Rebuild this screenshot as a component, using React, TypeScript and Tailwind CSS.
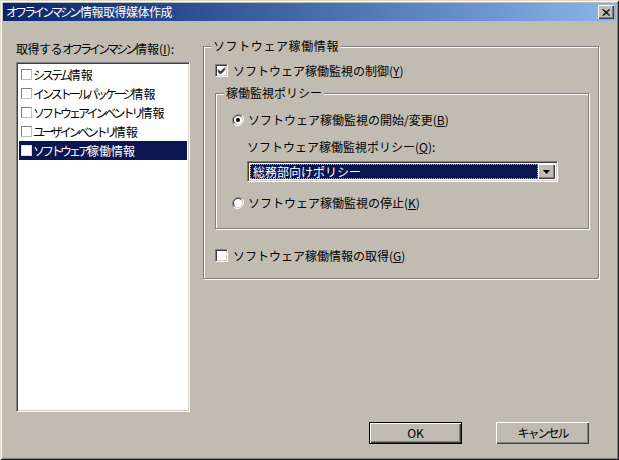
import React from "react";

const font = { fontFamily: '"Noto Sans CJK JP", "Noto Sans", sans-serif' };

function Check({ checked }: { checked: boolean }) {
  return (
    <div className="w-[13px] h-[13px] bg-white border border-[#808080] border-r-white border-b-white shadow-[inset_1px_1px_0_#404040,inset_-1px_-1px_0_#d4d0c8] flex items-center justify-center shrink-0">
      {checked && (
        <svg width="9" height="9" viewBox="0 0 9 9">
          <path d="M1 3.5 L3.5 6 L8 1.5 M1 4.5 L3.5 7 L8 2.5 M1 5.5 L3.5 8 L8 3.5" stroke="#000" strokeWidth="1" fill="none" />
        </svg>
      )}
    </div>
  );
}

function Radio({ checked }: { checked: boolean }) {
  return (
    <svg width="12" height="12" viewBox="0 0 12 12" className="shrink-0">
      <path d="M10.2 1.8 A6 6 0 0 0 1.8 10.2" stroke="#808080" strokeWidth="1" fill="none" />
      <path d="M1.8 10.2 A6 6 0 0 0 10.2 1.8" stroke="#ffffff" strokeWidth="1" fill="none" />
      <circle cx="6" cy="6" r="4.5" fill="#fff" />
      <path d="M9.2 2.8 A4.5 4.5 0 0 0 2.8 9.2" stroke="#404040" strokeWidth="1" fill="none" />
      <path d="M2.8 9.2 A4.5 4.5 0 0 0 9.2 2.8" stroke="#d4d0c8" strokeWidth="1" fill="none" />
      {checked && <circle cx="6" cy="6" r="2" fill="#000" />}
    </svg>
  );
}

function Btn({ children, def }: { children: React.ReactNode; def?: boolean }) {
  return (
    <div
      className={
        "w-[93px] h-[22px] flex items-center justify-center text-[12px] text-black bg-[#c0bcb1] " +
        (def
          ? "border border-black shadow-[inset_1px_1px_0_#fff,inset_-1px_-1px_0_#404040,inset_-2px_-2px_0_#808080]"
          : "shadow-[inset_1px_1px_0_#fff,inset_-1px_-1px_0_#404040,inset_-2px_-2px_0_#808080]")
      }
    >
      {children}
    </div>
  );
}

function ListItem({ kana, kanji, selected }: { kana: string; kanji: string; selected?: boolean }) {
  return (
    <div className={"h-[19px] flex items-center pl-[2px] " + (selected ? "bg-[#0b1650] text-white" : "text-black")}>
      <div className={"w-[11px] h-[11px] bg-white border " + (selected ? "border-[#e0e0e0]" : "border-[#808080] border-r-[#c0c0c0] border-b-[#c0c0c0]")} />
      <span className="ml-[1px] text-[12px] leading-none whitespace-nowrap">
        <span className="tracking-[-3px]">{kana}</span>
        <span className="tracking-[0px]">{kanji}</span>
      </span>
    </div>
  );
}

export default function App() {
  return (
    <div
      className="w-[619px] h-[460px] bg-[#c0bcb1] p-[3px] flex flex-col shadow-[inset_1px_1px_0_#dcd8cc,inset_-1px_-1px_0_#202020,inset_2px_2px_0_#fff,inset_-2px_-2px_0_#808080] overflow-hidden"
      style={font}
    >
      {/* title bar */}
      <div className="h-[18px] bg-gradient-to-r from-[#0a246a] to-[#8ab6ec] flex items-center pl-[3px] pr-[2px]">
        <span className="text-white text-[12px] leading-none whitespace-nowrap">
          <span className="tracking-[-3px]">オフラインマシン</span>
          <span className="ml-[2px] tracking-[-0.5px]">情報取得媒体作成</span>
        </span>
        <div className="ml-auto w-[16px] h-[14px] bg-[#c0bcb1] shadow-[inset_1px_1px_0_#fff,inset_-1px_-1px_0_#404040,inset_-2px_-2px_0_#808080] flex items-center justify-center">
          <svg width="8" height="7" viewBox="0 0 8 7">
            <path d="M0.5 0.5 L7 6.5 M1.5 0.5 L8 6.5 M7 0.5 L0.5 6.5 M8 0.5 L1.5 6.5" stroke="#000" strokeWidth="1" fill="none" />
          </svg>
        </div>
      </div>

      {/* body */}
      <div className="flex pl-[13px] pt-[20px]">
        {/* left */}
        <div className="w-[174px] flex flex-col">
          <div className="h-[16px] leading-[16px] text-[12px] text-black whitespace-nowrap">
            <span className="tracking-[-0.5px]">取得する</span>
            <span className="tracking-[-3px]">オフラインマシン</span>
            <span className="ml-[1px]">情報(<span className="underline">I</span>):</span>
          </div>
          <div className="mt-[5px] h-[350px] bg-white border border-[#808080] border-r-white border-b-white shadow-[inset_1px_1px_0_#404040,inset_-1px_-1px_0_#d4d0c8] p-[1px]">
            <div className="pt-[1px] px-[1px]">
              <ListItem kana="システム" kanji="情報" />
              <ListItem kana="インストールパッケージ" kanji="情報" />
              <ListItem kana="ソフトウェアインベントリ" kanji="情報" />
              <ListItem kana="ユーザインベントリ" kanji="情報" />
              <ListItem kana="ソフトウェア" kanji="稼働情報" selected />
            </div>
          </div>
        </div>

        {/* right */}
        <div className="ml-[13px] w-[396px] flex flex-col">
          <div className="mt-[5px] h-[233px] relative border border-[#808080] shadow-[1px_1px_0_#fff,inset_1px_1px_0_#fff] flex flex-col pl-[11px] pt-[17px] text-[12px] text-black">
            <span className="absolute -top-[9px] left-[7px] px-[2px] bg-[#c0bcb1] leading-[16px] tracking-[0.6px]">ソフトウェア稼働情報</span>

            <div className="flex items-center h-[13px]">
              <Check checked />
              <span className="ml-[5px] leading-none">
                ソフトウェア稼働監視の制御(<span className="underline">Y</span>)
              </span>
            </div>

            <div className="mt-[16px] w-[374px] h-[136px] relative border border-[#808080] shadow-[1px_1px_0_#fff,inset_1px_1px_0_#fff] flex flex-col pl-[16px] pt-[20px]">
              <span className="absolute -top-[9px] left-[8px] px-[2px] bg-[#c0bcb1] leading-[16px]">稼働監視ポリシー</span>

              <div className="flex items-center h-[12px]">
                <Radio checked />
                <span className="ml-[4px] leading-none">
                  ソフトウェア稼働監視の開始/変更(<span className="underline">B</span>)
                </span>
              </div>

              <div className="mt-[14px] ml-[15px] h-[14px] leading-[14px]">
                ソフトウェア稼働監視ポリシー(<span className="underline">Q</span>):
              </div>

              <div className="mt-[7px] ml-[15px] w-[311px] h-[21px] bg-white border border-[#808080] border-r-white border-b-white shadow-[inset_1px_1px_0_#404040,inset_-1px_-1px_0_#d4d0c8] flex p-[2px]">
                <div className="flex-1 bg-[#0b1650] border border-dotted border-[#c8a860] flex items-center pl-[2px]">
                  <span className="text-white leading-none">総務部向けポリシー</span>
                </div>
                <div className="w-[17px] h-full bg-[#c0bcb1] shadow-[inset_1px_1px_0_#fff,inset_-1px_-1px_0_#404040,inset_-2px_-2px_0_#808080] flex items-center justify-center">
                  <svg width="7" height="4" viewBox="0 0 7 4">
                    <path d="M0 0 H7 L3.5 4 Z" fill="#000" />
                  </svg>
                </div>
              </div>

              <div className="mt-[15px] flex items-center h-[12px]">
                <Radio checked={false} />
                <span className="ml-[4px] leading-none">
                  ソフトウェア稼働監視の停止(<span className="underline">K</span>)
                </span>
              </div>
            </div>

            <div className="mt-[20px] flex items-center h-[13px]">
              <Check checked={false} />
              <span className="ml-[5px] leading-none">
                ソフトウェア稼働情報の取得(<span className="underline">G</span>)
              </span>
            </div>
          </div>

          <div className="mt-[143px] flex justify-end gap-[34px] pr-[10px]">
            <Btn def>OK</Btn>
            <Btn>
              <span className="tracking-[-2px]">キャンセル</span>
            </Btn>
          </div>
        </div>
      </div>
    </div>
  );
}
